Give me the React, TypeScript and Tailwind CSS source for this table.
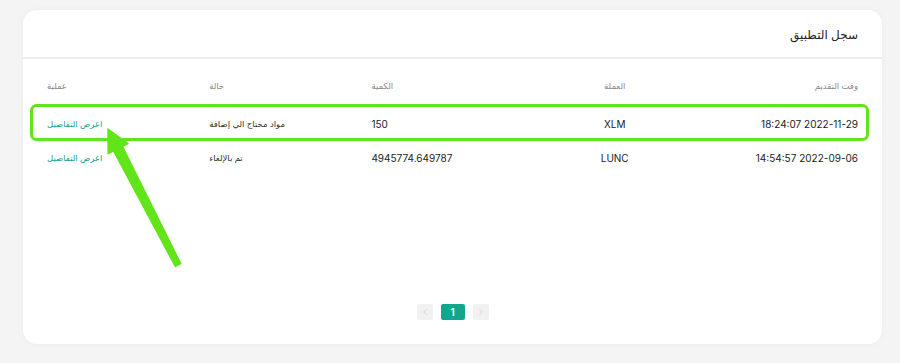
import { ChevronLeft, ChevronRight } from "lucide-react"

const rows = [
  {
    time: "2022-11-29 18:24:07",
    coin: "XLM",
    amount: "150",
    status: "مواد مختاج الي إضافة",
  },
  {
    time: "2022-09-06 14:54:57",
    coin: "LUNC",
    amount: "4945774.649787",
    status: "تم بالإلغاء",
  },
]

const cols = ["وقت التقديم", "العملة", "الكمية", "حالة", "عملية"]

function Annotation() {
  return (
    <svg
      className="pointer-events-none absolute left-0 top-0"
      width="900"
      height="363"
      viewBox="0 0 900 363"
    >
      <rect
        x="31.5"
        y="105.5"
        width="836"
        height="34"
        rx="5"
        fill="none"
        stroke="#62e41a"
        strokeWidth="3"
      />
      <polygon
        points="108,129 128,143.6 122.4,146.3 180.7,263.6 175.3,266.4 113.6,150.9 108.2,153.6"
        fill="#62e41a"
        stroke="#62e41a"
        strokeWidth="1.5"
        strokeLinejoin="round"
      />
    </svg>
  )
}

export default function App() {
  return (
    <div
      className="relative h-[363px] w-[900px] overflow-hidden bg-[#f4f4f5] pt-[10px]"
      style={{ fontFamily: "Inter, 'DejaVu Sans', sans-serif" }}
    >
      <div
        dir="rtl"
        className="mx-[23px] flex h-[334px] w-[859px] flex-col rounded-[14px] bg-white shadow-[0_0_6px_rgba(0,0,0,0.04)]"
      >
        <div className="flex h-[47px] items-center px-6 pt-[2px] text-[12px] text-[#222]">
          سجل التطبيق
        </div>
        <div className="h-[2px] bg-[#eeedf6]" />

        <div className="px-6 pt-[16px]">
          <div className="grid h-[22px] grid-cols-5 items-center text-[8.5px] text-[#8a8a8a]">
            {cols.map((c, i) => (
              <div
                key={c}
                className={
                  i === 0 ? "text-right" : i === 1 ? "text-center" : "text-left"
                }
              >
                {c}
              </div>
            ))}
          </div>

          <div className="mt-[10px]">
            {rows.map(r => (
              <div
                key={r.coin}
                className="grid h-[34px] grid-cols-5 items-center text-[10px] text-[#1c1c1c]"
              >
                <div className="text-right">{r.time}</div>
                <div className="text-center">{r.coin}</div>
                <div className="text-left">{r.amount}</div>
                <div className="text-left text-[8.5px] text-[#333]">{r.status}</div>
                <div className="text-left text-[8.5px] text-[#16a08b]">
                  اعرض التفاصيل
                </div>
              </div>
            ))}
          </div>
        </div>

        <div dir="ltr" className="mt-auto mb-6 flex items-center justify-center gap-2">
          <div className="flex h-4 w-4 items-center justify-center rounded-[2px] bg-[#f1f1f2] text-[#c4c4c8]">
            <ChevronLeft size={10} strokeWidth={1.5} />
          </div>
          <div className="flex h-4 w-6 items-center justify-center rounded-[2px] bg-[#13a68f] text-[10px] font-semibold text-white">
            1
          </div>
          <div className="flex h-4 w-4 items-center justify-center rounded-[2px] bg-[#f1f1f2] text-[#c4c4c8]">
            <ChevronRight size={10} strokeWidth={1.5} />
          </div>
        </div>
      </div>
      <Annotation />
    </div>
  )
}
